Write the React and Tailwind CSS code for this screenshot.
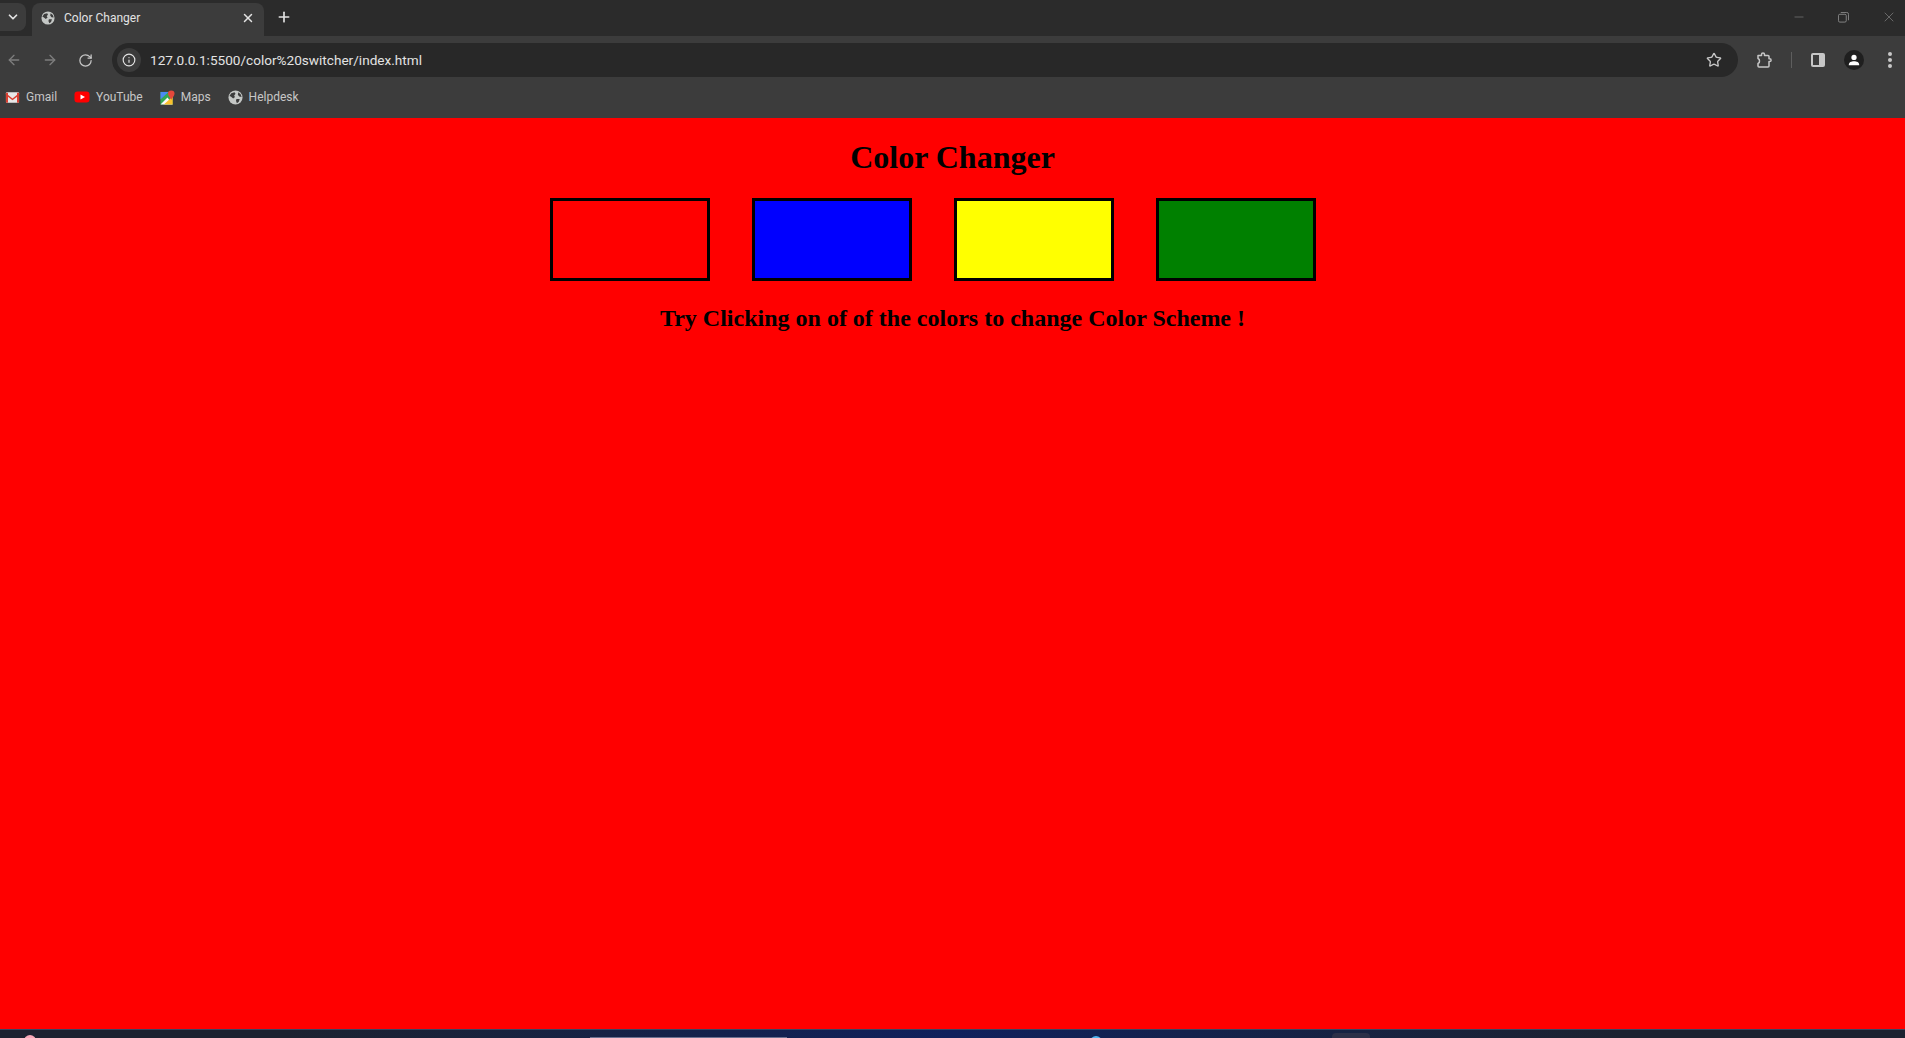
import React from 'react';
import { ChevronDown, X, Plus, ArrowLeft, ArrowRight, RotateCw, Info, Star, Minus } from 'lucide-react';

const Globe = ({ className }) => (
    <svg viewBox="0 0 16 16" className={className}>
        <circle cx="8" cy="8" r="7.5" fill="#c4c7c5" />
        <path d="M3.5 3.5 L7 2.5 L8 4 L6.5 6 L7.5 7.5 L5.5 9 L3 7 L1.5 6.5 Z" fill="#3c3c3c" />
        <path d="M11 2.5 L13.5 4.5 L14.5 7.5 L12 7 L10.5 5 Z M9 9.5 L12.5 9.5 L11.5 12.5 L9.5 14 L8.5 11.5 Z" fill="#3c3c3c" />
    </svg>
);

const GmailIcon = () => (
    <svg viewBox="0 0 16 16" className="w-[15px] h-[15px]">
        <rect x="1" y="2.5" width="14" height="11" rx="1" fill="#e8e8e8" />
        <path d="M1 3.5 L8 9 L15 3.5 V5.5 L8 11 L1 5.5 Z" fill="#d94032" />
        <rect x="1" y="3" width="2.2" height="10.5" fill="#d94032" />
        <rect x="12.8" y="3" width="2.2" height="10.5" fill="#d94032" />
    </svg>
);

const YoutubeIcon = () => (
    <svg viewBox="0 0 16 16" className="w-4 h-4">
        <rect x="0.5" y="2.5" width="15" height="11" rx="3" fill="#f00" />
        <path d="M6.5 5.5 L11 8 L6.5 10.5 Z" fill="#fff" />
    </svg>
);

const MapsIcon = () => (
    <svg viewBox="0 0 16 16" className="w-[15px] h-[15px]">
        <rect x="0.5" y="2" width="13" height="13.5" fill="#34a853" />
        <path d="M0.5 15.5 L8 8 L13.5 15.5 Z" fill="#fbfbfb" />
        <path d="M0.5 2 H9 L0.5 10 Z" fill="#4a8af4" />
        <path d="M4 15.5 L13.5 7 V15.5 Z" fill="#fbc02d" />
        <path d="M12 0.5 A3.5 3.5 0 0 1 15.5 4 C15.5 6.5 13 8 12 10.5 C11 8 8.5 6.5 8.5 4 A3.5 3.5 0 0 1 12 0.5 Z" fill="#e5483b" />
    </svg>
);

const ExtensionIcon = () => (
    <svg viewBox="0 0 16 16" className="w-[16px] h-[16px] ml-[18px]" fill="none" stroke="#c7c7c7" strokeWidth="1.5" strokeLinejoin="round">
        <path d="M2 3.5 H5.5 V2.5 A1.5 1.5 0 0 1 8.5 2.5 V3.5 H12 A1 1 0 0 1 13 4.5 V6.8 H13.7 A1.4 1.4 0 0 1 13.7 9.6 H13 V14 A1 1 0 0 1 12 15 H3 A1 1 0 0 1 2 14 V11.5 A2.3 2.3 0 0 0 3.5 9 A2.3 2.3 0 0 0 2 6.5 Z" />
    </svg>
);

const Bookmark = ({ icon, label }) => (
    <div className="flex items-center gap-[6px]">
        {icon}
        <span className="text-[12px] leading-[16px] text-[#c7c7c7]">{label}</span>
    </div>
);

const Swatch = ({ color }) => (
    <div className={`w-[160px] h-[83px] border-[3px] border-black ${color}`}></div>
);

const App = () => {
    return (
        <div className="h-screen flex flex-col overflow-hidden bg-[#f00] font-['Roboto','Liberation_Sans',sans-serif]">
            {/* Tab strip */}
            <div className="h-[36px] shrink-0 bg-[#2b2b2b] flex items-end">
                <div className="w-[26px] h-[28px] mb-[5px] flex items-center justify-center bg-[#3c3c3c] rounded-r-lg">
                    <ChevronDown className="w-[14px] h-[14px] text-[#e3e3e3]" strokeWidth={3} />
                </div>
                <div className="w-[232px] h-[33px] ml-[6px] pl-[9px] pr-[9px] pb-[3px] bg-[#3c3c3c] rounded-t-lg flex items-center">
                    <Globe className="w-[14px] h-[14px]" />
                    <span className="ml-[9px] text-[12px] text-[#e3e3e3]">Color Changer</span>
                    <X className="w-[14px] h-[14px] ml-auto text-[#e3e3e3]" strokeWidth={2.5} />
                </div>
                <Plus className="w-[16px] h-[16px] ml-[12px] mb-[11px] text-[#e3e3e3]" strokeWidth={2.5} />
                <div className="ml-auto flex items-center gap-[32px] pr-[8px] mb-[11px] text-[#8a8a8a]">
                    <Minus className="w-[14px] h-[14px]" strokeWidth={1} />
                    <svg viewBox="0 0 12 12" className="w-[11px] h-[11px]" fill="none" stroke="currentColor">
                        <rect x="0.5" y="2.5" width="8.5" height="8.5" rx="1.5" />
                        <path d="M3 0.5 H9.5 A2 2 0 0 1 11.5 2.5 V9" />
                    </svg>
                    <X className="w-[16px] h-[16px]" strokeWidth={1} />
                </div>
            </div>

            {/* Toolbar */}
            <div className="h-[48px] shrink-0 bg-[#3c3c3c] flex items-center">
                <ArrowLeft className="w-[16px] h-[16px] ml-[6px] text-[#7d7d7d]" strokeWidth={2} />
                <ArrowRight className="w-[16px] h-[16px] ml-[20px] text-[#7d7d7d]" strokeWidth={2} />
                <RotateCw className="w-[15px] h-[15px] ml-[20px] text-[#c7c7c7]" strokeWidth={2} />
                <div className="ml-[19px] h-[34px] w-[1626px] rounded-full bg-[#282828] flex items-center pl-[5px] pr-[16px]">
                    <div className="w-[24px] h-[24px] rounded-full bg-[#3c3c3c] flex items-center justify-center">
                        <Info className="w-[14px] h-[14px] text-[#e3e3e3]" strokeWidth={2} />
                    </div>
                    <span className="ml-[9px] text-[13.6px] text-[#e3e3e3]">127.0.0.1:5500/color%20switcher/index.html</span>
                    <Star className="w-[16px] h-[16px] ml-auto text-[#c7c7c7]" strokeWidth={2} />
                </div>
                <ExtensionIcon />
                <div className="w-px h-[16px] bg-[#5e5e5e] ml-[19px]"></div>
                <div className="w-[14px] h-[14px] ml-[19px] rounded-[2px] bg-[#c7c7c7] flex p-[2px]">
                    <div className="w-[6px] h-full bg-[#3c3c3c]"></div>
                </div>
                <div className="w-[20px] h-[20px] ml-[19px] rounded-full bg-[#1f1f1f] flex items-center justify-center">
                    <svg viewBox="0 0 16 16" className="w-[14px] h-[14px]" fill="#fff">
                        <circle cx="8" cy="5" r="3" />
                        <path d="M2 14 C2 10.5 5 9.5 8 9.5 C11 9.5 14 10.5 14 14 Z" />
                    </svg>
                </div>
                <div className="ml-[24px] flex flex-col gap-[2px]">
                    <div className="w-[4px] h-[4px] rounded-full bg-[#c7c7c7]"></div>
                    <div className="w-[4px] h-[4px] rounded-full bg-[#c7c7c7]"></div>
                    <div className="w-[4px] h-[4px] rounded-full bg-[#c7c7c7]"></div>
                </div>
            </div>

            {/* Bookmarks bar */}
            <div className="h-[34px] shrink-0 bg-[#3c3c3c] flex items-center gap-[17px] pl-[5px] pb-[8px]">
                <Bookmark icon={<GmailIcon />} label="Gmail" />
                <Bookmark icon={<YoutubeIcon />} label="YouTube" />
                <Bookmark icon={<MapsIcon />} label="Maps" />
                <Bookmark icon={<Globe className="w-[15px] h-[15px]" />} label="Helpdesk" />
            </div>

            {/* Page */}
            <div className="flex-1 bg-[#f00] text-black font-['Liberation_Serif',serif] font-bold text-center">
                <h1 className="text-[32px] leading-[37px] mt-[21px]">Color Changer</h1>
                <div className="flex justify-center gap-[42px] pr-[39px] mt-[22px]">
                    <Swatch color="bg-[#f00]" />
                    <Swatch color="bg-[#00f]" />
                    <Swatch color="bg-[#ff0]" />
                    <Swatch color="bg-[#008000]" />
                </div>
                <p className="text-[24px] leading-[28px] mt-[23px]">Try Clicking on of of the colors to change Color Scheme !</p>
            </div>

            {/* Taskbar sliver */}
            <div className="h-[9px] shrink-0 border-t border-[#3a4664] bg-gradient-to-r from-[#1c2230] from-[15%] via-[#10205c] via-[50%] to-[#1c2230] to-[85%] flex overflow-hidden">
                <div className="w-[12px] h-[12px] shrink-0 rounded-full bg-[#f7a8b8] ml-[24px] mt-[5px]"></div>
                <div className="w-[197px] h-[1px] shrink-0 bg-[#6a7090] ml-[554px] mt-[7px]"></div>
                <div className="w-[12px] h-[12px] shrink-0 rounded-full bg-[#4fb4f0] ml-[303px] mt-[6px]"></div>
                <div className="w-[38px] h-[6px] shrink-0 rounded-t bg-[#2c3048] ml-[230px] mt-[3px]"></div>
            </div>
        </div>
    );
};

export default App;
